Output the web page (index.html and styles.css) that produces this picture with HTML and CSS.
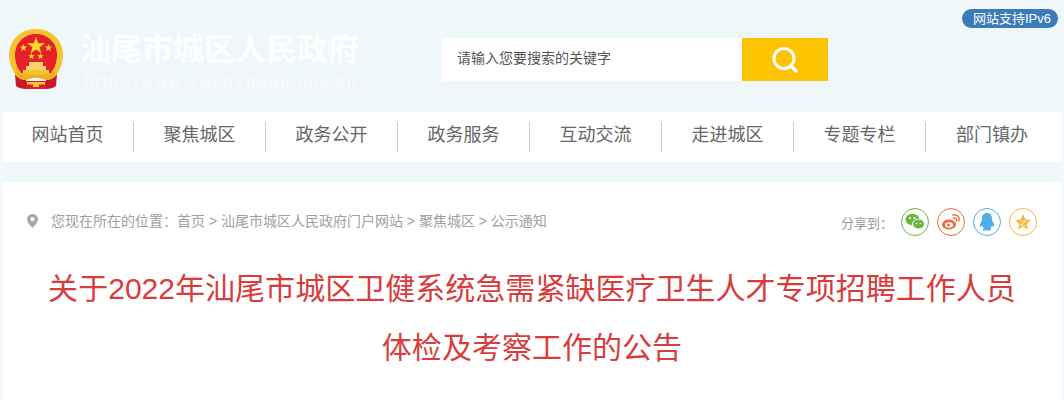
FILE: index.html
```html
<!DOCTYPE html>
<html lang="zh-CN">
<head>
    <meta charset="UTF-8">
    <meta name="viewport" content="width=device-width, initial-scale=1.0">
    <title>关于2022年汕尾市城区卫健系统急需紧缺医疗卫生人才专项招聘工作人员体检及考察工作的公告</title>
    <link rel="stylesheet" href="styles.css">
</head>
<body>
    <header class="top">
        <a class="ipv6" href="#">网站支持IPv6</a>
        <div class="logo">
            <svg class="emblem" width="56" height="62" viewBox="0 0 56 62">
                <path d="M28 1C12 1 1 13 1 27c0 9 4 17 9 23h36c5-6 9-14 9-23C55 13 44 1 28 1z" fill="#f5c531"/>
                <path d="M28 6C15 6 7 16 7 27c0 7 2 13 6 18h30c4-5 6-11 6-18C49 16 41 6 28 6z" fill="#e8202a"/>
                <polygon points="28,9 30.200,15.200 37,15.200 31.500,19.200 33.600,25.500 28,21.600 22.400,25.500 24.500,19.200 19,15.200 25.800,15.200" fill="#fbd92c"/>
                <polygon points="15.500,16 16.500,18.600 19.300,18.600 17,20.300 17.900,23 15.500,21.400 13.100,23 14,20.300 11.700,18.600 14.500,18.600" fill="#fbd92c"/>
                <polygon points="40.500,16 41.500,18.600 44.300,18.600 42,20.300 42.900,23 40.500,21.400 38.100,23 39,20.300 36.700,18.600 39.500,18.600" fill="#fbd92c"/>
                <polygon points="23.500,25 24.400,27.300 26.900,27.300 24.900,28.800 25.600,31.200 23.500,29.800 21.400,31.200 22.100,28.800 20.100,27.300 22.600,27.300" fill="#fbd92c"/>
                <polygon points="32.500,25 33.400,27.300 35.900,27.300 33.900,28.800 34.600,31.200 32.500,29.800 30.400,31.200 31.100,28.800 29.100,27.300 31.600,27.300" fill="#fbd92c"/>
                <path d="M21 34h14v4h3v4H18v-4h3z" fill="#f7d26a"/>
                <path d="M15 42h26v3H15z" fill="#f5c531"/>
                <path d="M8 43c6 3 13 4 20 4s14-1 20-4l1 5c-3 3-7 4-11 4l-10-3-10 3c-4 0-8-1-11-4z" fill="#eeb21f"/>
                <path d="M7 47c3 3 6 5 11 5v9c-4 0-8-1-10-3zM49 47c-3 3-6 5-11 5v9c4 0 8-1 10-3z" fill="#c8182a"/>
                <path d="M18 53h20v8H18z" fill="#d9202c"/>
                <path d="M19 54h18v2.500H19zM25 56h6v3h-6z" fill="#f5c531"/>
            </svg>
            <div class="logo-text">
                <div class="site-name">汕尾市城区人民政府</div>
                <div class="site-url">http://www.swchengqu.gov.cn</div>
            </div>
        </div>
        <form class="search">
            <div class="search-input">请输入您要搜索的关键字</div>
            <button class="search-btn" type="button">
                <svg width="28" height="28" viewBox="0 0 28 28" fill="none" stroke="#fff">
                    <circle cx="13" cy="12.500" r="10" stroke-width="3"/>
                    <path d="M20 20l5 5" stroke-width="3.500" stroke-linecap="round"/>
                </svg>
            </button>
        </form>
    </header>

    <nav class="nav">
        <a href="#">网站首页</a>
        <a href="#">聚焦城区</a>
        <a href="#">政务公开</a>
        <a href="#">政务服务</a>
        <a href="#">互动交流</a>
        <a href="#">走进城区</a>
        <a href="#">专题专栏</a>
        <a href="#">部门镇办</a>
    </nav>

    <main class="content">
        <div class="crumb-row">
            <div class="crumbs">
                <svg class="pin" width="11" height="14" viewBox="0 0 11 14">
                    <path d="M5.500 0C2.500 0 0 2.300 0 5.300 0 9 5.500 14 5.500 14S11 9 11 5.300C11 2.300 8.500 0 5.500 0zm0 7.300a2.100 2.100 0 1 1 0-4.200 2.100 2.100 0 0 1 0 4.200z" fill="#a8a8a8"/>
                </svg>
                <span>您现在所在的位置<span class="colon">：</span>首页 &gt; 汕尾市城区人民政府门户网站 &gt; 聚焦城区 &gt; 公示通知</span>
            </div>
            <div class="share">
                <span class="share-label">分享到<span class="colon">：</span></span>
                <a class="share-icon wechat" href="#">
                    <svg width="20" height="18" viewBox="0 0 20 18" fill="#6db543">
                        <ellipse cx="7.500" cy="6.500" rx="7" ry="5.800"/>
                        <ellipse cx="13.500" cy="11" rx="6" ry="5" stroke="#fff"/>
                        <circle cx="5" cy="5" r="1" fill="#fff"/>
                        <circle cx="9.500" cy="5" r="1" fill="#fff"/>
                        <circle cx="11.500" cy="10.500" r=".8" fill="#fff"/>
                        <circle cx="15.500" cy="10.500" r=".8" fill="#fff"/>
                    </svg>
                </a>
                <a class="share-icon weibo" href="#">
                    <svg width="20" height="18" viewBox="0 0 20 18" fill="none" stroke="#ee6c3a">
                        <ellipse cx="8" cy="11.500" rx="7" ry="5" fill="#ee6c3a" stroke="none"/>
                        <ellipse cx="8" cy="12" rx="4" ry="2.800" fill="#fff" stroke="none"/>
                        <circle cx="7.500" cy="12" r="1.500" fill="#ee6c3a" stroke="none"/>
                        <path d="M12 2c4-1 7 2 6 6M12.500 5c2-.5 3.300 1 3 3" stroke-width="1.500" stroke-linecap="round"/>
                    </svg>
                </a>
                <a class="share-icon qq" href="#">
                    <svg width="18" height="20" viewBox="0 0 18 20" fill="#4eaee8">
                        <path d="M9 1C5.500 1 4 3.500 4 6.500v2C2.500 10.500 1.500 13 2 15c.8 0 1.500-.8 2-1.500.3 1.300 1 2.300 2 3-1 .3-1.500 1-1 1.700.7.600 3 .5 4-.2 1 .7 3.300.8 4 .2.500-.7 0-1.400-1-1.700 1-.7 1.700-1.700 2-3 .5.700 1.200 1.500 2 1.500.5-2-.5-4.500-2-6.500v-2C14 3.500 12.500 1 9 1z"/>
                    </svg>
                </a>
                <a class="share-icon star" href="#">
                    <svg width="18" height="18" viewBox="0 0 18 18">
                        <polygon points="9,1 11.400,6.300 17,7 12.800,10.900 14,16.500 9,13.700 4,16.500 5.200,10.900 1,7 6.600,6.300" fill="#f9b73e"/>
                        <path d="M6.500 8h5l-5 4.500h5" fill="none" stroke="#fde6a8" stroke-width="1.200"/>
                    </svg>
                </a>
            </div>
        </div>
        <h1 class="title">关于2022年汕尾市城区卫健系统急需紧缺医疗卫生人才专项招聘工作人员<br>体检及考察工作的公告</h1>
    </main>
</body>
</html>
```

FILE: styles.css
```css
html, body { margin: 0; padding: 0; height: 400px; overflow: hidden; }
body {
    background-color: #eff7fb;
    font-family: "Liberation Sans", "Noto Sans CJK SC", sans-serif;
    color: #666;
}
a { color: inherit; text-decoration: none; }

.top { position: relative; height: 112px; display: flex; }
.ipv6 {
    position: absolute; top: 9px; right: 6px;
    background: #3a7bb8; color: #fff; font-size: 13px; line-height: 19px;
    padding: 0 7px 0 11px; border-radius: 10px;
}
.logo { display: flex; width: 442px; padding: 28px 0 0 8px; box-sizing: border-box; }
.emblem { flex: none; }
.logo-text { margin-left: 16px; color: #fff; }
.site-name { font-size: 31px; font-weight: bold; line-height: 40px; margin-top: 2px; opacity: .95; }
.site-url { font-size: 16px; line-height: 20px; letter-spacing: 2.400px; margin: 2px 0 0 4px; opacity: .7; white-space: nowrap; }

.search { display: flex; height: 43px; margin: 38px 0 0 0; }
.search-input { width: 300px; background: #fff; font-size: 14px; line-height: 41px; padding-left: 15px; box-sizing: border-box; color: #555; }
.search-btn { width: 86px; height: 43px; background: #fcc400; border: none; padding: 0; display: flex; align-items: center; justify-content: center; }

.nav { display: flex; height: 50px; margin: 0 2px; background: #fff; align-items: center; }
.nav a { width: 132px; height: 30px; line-height: 26px; font-size: 18px; text-align: center; color: #666; border-right: 1px solid #ccc; box-sizing: border-box; flex: none; }
.nav a:last-child { border-right: none; }

.content { margin: 20px 2px 0; background: #fff; height: 218px; overflow: hidden; }
.crumb-row { display: flex; justify-content: space-between; padding: 26px 25px 0 25px; height: 32px; }
.crumbs { display: flex; align-items: center; height: 24px; font-size: 14px; color: #a0a0a0; }
.colon { font-family: "Noto Sans CJK TC", sans-serif; }
.pin { margin-right: 13px; margin-top: 2px; }
.share { display: flex; align-items: center; height: 28px; }
.share-label { font-size: 13px; color: #999; }
.share-icon { width: 28px; height: 28px; box-sizing: border-box; border: 1px solid; border-radius: 50%; margin-left: 8px; display: flex; align-items: center; justify-content: center; }
.wechat { border-color: #6db543; }
.weibo { border-color: #ee6c3a; }
.qq { border-color: #4eaee8; }
.star { border-color: #f9b73e; }

.title { margin: 19px 0 0; font-size: 30px; font-weight: normal; line-height: 59px; text-align: center; color: #d83c3c; letter-spacing: .03px; }
```
